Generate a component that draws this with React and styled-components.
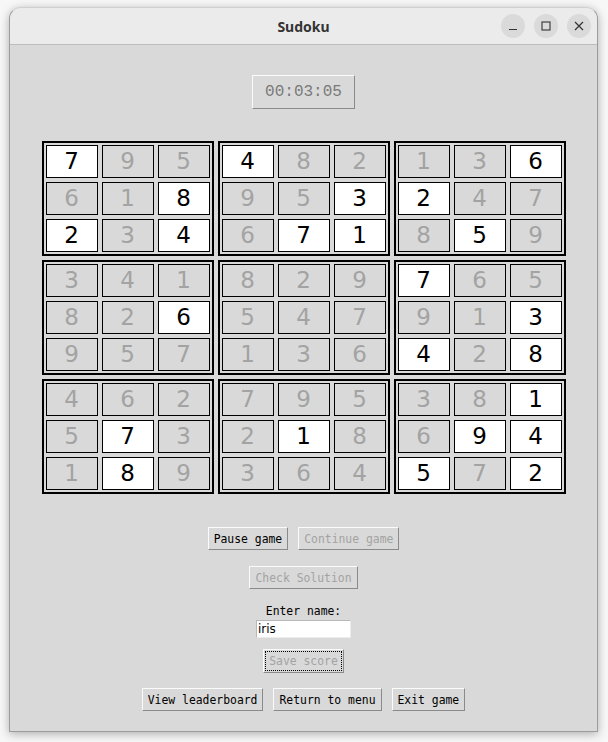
import React from 'react';
import styled, { createGlobalStyle } from 'styled-components';

const GlobalStyle = createGlobalStyle`
  html, body {
    margin: 0;
    padding: 0;
    background: #f7f7f7;
  }
`;

const Desktop = styled.div`
  width: 608px;
  height: 742px;
  padding: 7px 0 0 9px;
  box-sizing: border-box;
`;

const Window = styled.div`
  width: 589px;
  height: 725px;
  box-sizing: border-box;
  border: 1px solid #9c9c9c;
  border-top-color: #d0d0d0;
  border-radius: 12px 12px 0 0;
  background: #d9d9d9;
  box-shadow: 0 2px 10px rgba(0, 0, 0, 0.3);
  display: flex;
  flex-direction: column;
  overflow: hidden;
`;

const TitleBar = styled.div`
  height: 37px;
  flex: none;
  box-sizing: border-box;
  background: #ebebeb;
  border-bottom: 1px solid #bdbdbd;
  display: flex;
  align-items: center;
  justify-content: center;
  position: relative;
`;

const Title = styled.span`
  font-family: 'Noto Sans', 'DejaVu Sans', sans-serif;
  font-weight: 700;
  font-size: 14px;
  color: #333;
`;

const WinControls = styled.div`
  position: absolute;
  right: 6px;
  top: 6px;
  display: flex;
  gap: 9px;
`;

const WinButton = styled.div`
  width: 24px;
  height: 24px;
  border-radius: 50%;
  background: #dadada;
  display: flex;
  align-items: center;
  justify-content: center;
`;

const Body = styled.div`
  flex: 1;
  display: flex;
  flex-direction: column;
  align-items: center;
  padding-top: 30px;
  font-family: 'DejaVu Sans Mono', 'Liberation Mono', monospace;
`;

const Timer = styled.div`
  width: 103px;
  height: 34px;
  box-sizing: border-box;
  border: 1px solid;
  border-color: #fbfbfb #8a8a8a #8a8a8a #fbfbfb;
  display: flex;
  align-items: center;
  justify-content: center;
  font-family: 'Liberation Mono', 'DejaVu Sans Mono', monospace;
  font-size: 16px;
  color: #7a7a7a;
  margin-bottom: 32px;
`;

const Board = styled.div`
  display: grid;
  grid-template-columns: repeat(3, auto);
  gap: 4px;
  margin-bottom: 33px;
`;

const Box = styled.div`
  border: 2px solid #000;
  padding: 2px;
  display: grid;
  grid-template-columns: repeat(3, 52px);
  grid-auto-rows: 33px;
  gap: 4px;
`;

const Cell = styled.div`
  box-sizing: border-box;
  border: 1px solid #000;
  background: ${(p) => (p.$user ? '#ffffff' : '#d9d9d9')};
  color: ${(p) => (p.$user ? '#000000' : '#a3a3a3')};
  font-family: 'DejaVu Sans', sans-serif;
  font-size: 23px;
  display: flex;
  align-items: center;
  justify-content: center;
  line-height: 1;
`;

const Row = styled.div`
  display: flex;
  gap: ${(p) => p.$gap || 10}px;
  margin-bottom: ${(p) => p.$mb || 0}px;
`;

const Button = styled.div`
  height: ${(p) => p.$h || 23}px;
  box-sizing: border-box;
  padding: 0 5px;
  border: 1px solid;
  border-color: #fbfbfb #8a8a8a #8a8a8a #fbfbfb;
  display: flex;
  align-items: center;
  justify-content: center;
  font-size: 11.4px;
  color: ${(p) => (p.$disabled ? '#a3a3a3' : '#000')};
  white-space: pre;
  position: relative;
`;

const FocusRing = styled.span`
  position: absolute;
  inset: 1px;
  border: 1px dotted #000;
`;

const Label = styled.div`
  font-size: 11.4px;
  color: #000;
  margin-bottom: 2px;
  line-height: 14px;
`;

const NameInput = styled.div`
  width: 95px;
  height: 18px;
  box-sizing: border-box;
  background: #fff;
  border: 1px solid;
  border-color: #b8b8b8 #ececec #ececec #b8b8b8;
  font-family: 'DejaVu Sans', sans-serif;
  font-size: 12px;
  line-height: 16px;
  padding-left: 1px;
  color: #000;
  margin-bottom: 11px;
`;

const Icon = styled.svg`
  display: block;
`;

const boxes = [
  '*7 9 5 6 1 *8 *2 3 *4',
  '*4 8 2 9 5 *3 6 *7 *1',
  '1 3 *6 *2 4 7 8 *5 9',
  '3 4 1 8 2 *6 9 5 7',
  '8 2 9 5 4 7 1 3 6',
  '*7 6 5 9 1 *3 *4 2 *8',
  '4 6 2 5 *7 3 1 *8 9',
  '7 9 5 2 *1 8 3 6 4',
  '3 8 *1 6 *9 *4 *5 7 *2',
];

const App = () => (
  <>
    <GlobalStyle />
    <Desktop>
      <Window>
        <TitleBar>
          <Title>Sudoku</Title>
          <WinControls>
            <WinButton>
              <Icon width="10" height="10" viewBox="0 0 10 10">
                <line x1="1" y1="8.5" x2="9" y2="8.5" stroke="#333" strokeWidth="1.2" />
              </Icon>
            </WinButton>
            <WinButton>
              <Icon width="10" height="10" viewBox="0 0 10 10">
                <rect x="1" y="1" width="8" height="8" fill="none" stroke="#333" strokeWidth="1.1" />
              </Icon>
            </WinButton>
            <WinButton>
              <Icon width="10" height="10" viewBox="0 0 10 10">
                <path d="M1 1 L9 9 M9 1 L1 9" stroke="#333" strokeWidth="1.2" />
              </Icon>
            </WinButton>
          </WinControls>
        </TitleBar>

        <Body>
          <Timer>00:03:05</Timer>

          <Board>
            {boxes.map((b, i) => (
              <Box key={i}>
                {b.split(' ').map((v, j) => (
                  <Cell key={j} $user={v.startsWith('*')}>
                    {v.replace('*', '')}
                  </Cell>
                ))}
              </Box>
            ))}
          </Board>

          <Row $mb={16}>
            <Button>Pause game</Button>
            <Button $disabled>Continue game</Button>
          </Row>
          <Row $mb={15}>
            <Button $disabled>Check Solution</Button>
          </Row>

          <Label>Enter name:</Label>
          <NameInput>iris</NameInput>
          <Row $mb={15}>
            <Button $disabled $h={24}>
              <FocusRing />
              Save score
            </Button>
          </Row>

          <Row>
            <Button>View leaderboard</Button>
            <Button>Return to menu</Button>
            <Button>Exit game</Button>
          </Row>
        </Body>
      </Window>
    </Desktop>
  </>
);

export default App;
